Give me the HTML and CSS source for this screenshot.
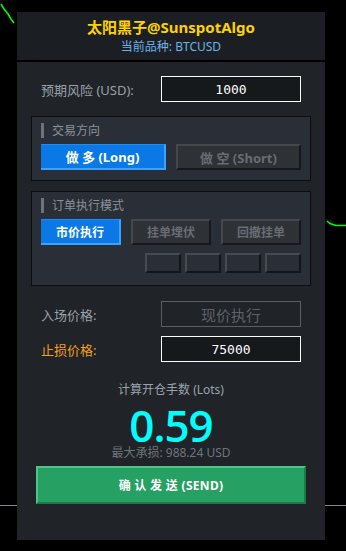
FILE: index.html
```html
<!DOCTYPE html>
<html lang="zh">
<head>
<meta charset="utf-8">
<title>SunspotAlgo</title>
<link rel="stylesheet" href="styles.css">
</head>
<body>
<svg class="chart" width="346" height="551" viewBox="0 0 346 551" aria-hidden="true">
  <polyline points="1,4 4,9 8,14 11,19 14,23" fill="none" stroke="#00ff00" stroke-width="1.5"/>
  <polyline points="327,221 330,223.5 336,225.5 346,225.5" fill="none" stroke="#00ff00" stroke-width="1.5"/>
  <line x1="0" y1="505.5" x2="346" y2="505.5" stroke="#7d8590" stroke-width="1"/>
</svg>
<div class="panel">
  <header class="head">
    <div class="title">太阳黑子@SunspotAlgo</div>
    <div class="subtitle">当前品种: BTCUSD</div>
  </header>
  <main class="body">
    <div class="row row-risk">
      <span class="label">预期风险 (USD):</span>
      <div class="field field-active">1000</div>
    </div>

    <section class="group group-dir">
      <div class="group-title"><span class="bar"></span>交易方向</div>
      <div class="btns two">
        <div class="btn btn-on">做 多 (Long)</div>
        <div class="btn btn-off">做 空 (Short)</div>
      </div>
    </section>

    <section class="group group-mode">
      <div class="group-title"><span class="bar"></span>订单执行模式</div>
      <div class="btns three">
        <div class="btn btn-on">市价执行</div>
        <div class="btn btn-off">挂单埋伏</div>
        <div class="btn btn-off">回撤挂单</div>
      </div>
      <div class="slots">
        <div class="slot"></div>
        <div class="slot"></div>
        <div class="slot"></div>
        <div class="slot"></div>
      </div>
    </section>

    <div class="row row-entry">
      <span class="label">入场价格:</span>
      <div class="field field-disabled">现价执行</div>
    </div>
    <div class="row row-stop">
      <span class="label label-warn">止损价格:</span>
      <div class="field field-active">75000</div>
    </div>

    <div class="result">
      <div class="result-label">计算开仓手数 (Lots)</div>
      <div class="result-value">0.59</div>
      <div class="result-sub">最大承损: 988.24 USD</div>
    </div>

    <div class="send">确 认 发 送 (SEND)</div>
  </main>
</div>
</body>
</html>
```

FILE: styles.css
```css
* { box-sizing: border-box; }

html, body {
  margin: 0;
  padding: 0;
  background: #000;
}

body {
  width: 346px;
  height: 551px;
  position: relative;
  overflow: hidden;
  font-family: "Noto Sans", "Noto Sans CJK SC", sans-serif;
  padding-top: 12px;
}

.chart {
  position: absolute;
  left: 0;
  top: 0;
  z-index: 0;
}

.panel {
  position: relative;
  z-index: 1;
  width: 308px;
  margin-left: 17px;
}

.head {
  height: 48px;
  background: #1b1f23;
  padding-top: 5px;
  text-align: center;
  margin-bottom: 2px;
}

.title {
  font-size: 15px;
  line-height: 20px;
  font-weight: 700;
  color: #ffd200;
}

.subtitle {
  margin-top: 2px;
  font-size: 12px;
  line-height: 16px;
  color: #6db2e8;
}

.body {
  height: 478px;
  background: #202328;
  padding: 14px 14px 0;
  display: flex;
  flex-direction: column;
}

.row {
  height: 26px;
  padding: 0 10px;
  display: flex;
  align-items: center;
  justify-content: space-between;
}

.label {
  font-size: 13px;
  color: #9aa1a9;
}

.label-warn { color: #f5a01e; }

.field {
  width: 140px;
  height: 26px;
  display: flex;
  align-items: center;
  justify-content: center;
}

.field-active {
  border: 1px solid #ffffff;
  background: #15191c;
  color: #ffffff;
  font-family: "DejaVu Sans Mono", monospace;
  font-size: 13px;
}

.field-disabled {
  border: 1px solid #5b5f64;
  color: #5d6268;
  font-size: 15px;
}

.group {
  background: #2a2f37;
  border: 1px solid #0b0d10;
  padding: 6px 9px 0;
}

.group-dir { margin-top: 14px; height: 65px; }
.group-mode { margin-top: 10px; height: 95px; }

.group-title {
  height: 14px;
  display: flex;
  align-items: center;
  gap: 8px;
  font-size: 12px;
  color: #8a919a;
}

.bar {
  width: 3px;
  height: 15px;
  background: #6c737c;
}

.btns {
  margin-top: 7px;
  display: grid;
  gap: 10px;
}

.btns.two { grid-template-columns: 1fr 1fr; }
.btns.three { grid-template-columns: 1fr 1fr 1fr; }

.btn {
  height: 26px;
  display: flex;
  align-items: center;
  justify-content: center;
  font-size: 13px;
  font-weight: 700;
}

.btn-on {
  background: #0a79e6;
  color: #ffffff;
  border-top: 1px solid #1f8cf5;
  border-right: 2px solid #3ba2ff;
  border-bottom: 2px solid #3ba2ff;
}

.btn-off {
  background: #2e3135;
  color: #686d74;
  border-top: 2px solid #44484d;
  border-left: 2px solid #44484d;
  border-right: 2px solid #16191c;
  border-bottom: 2px solid #16191c;
}

.group-mode .btn { font-size: 12px; }

.slots {
  margin-top: 8px;
  display: flex;
  justify-content: flex-end;
  gap: 4px;
}

.slot {
  width: 36px;
  height: 20px;
  background: #2a2f37;
  border-top: 2px solid #474c53;
  border-left: 2px solid #474c53;
  border-right: 2px solid #12161a;
  border-bottom: 2px solid #12161a;
}

.row-entry { margin-top: 15px; }
.row-stop { margin-top: 9px; }

.result {
  margin-top: 20px;
  text-align: center;
}

.result-label {
  font-size: 12px;
  line-height: 16px;
  color: #9aa3ad;
}

.result-value {
  margin-top: 7px;
  font-family: "Open Sans", sans-serif;
  font-size: 44px;
  font-weight: 600;
  line-height: 40px;
  letter-spacing: -1px;
  color: #00ffff;
}

.result-sub {
  font-size: 12px;
  line-height: 16px;
  color: #6f757c;
}

.send {
  margin: 5px 5px 0;
  height: 38px;
  background: #27a064;
  border-top: 2px solid #4cc586;
  border-left: 2px solid #4cc586;
  border-right: 2px solid #197a4a;
  border-bottom: 2px solid #197a4a;
  color: #ffffff;
  font-size: 12px;
  letter-spacing: 0.3px;
  font-weight: 700;
  display: flex;
  align-items: center;
  justify-content: center;
}
```
